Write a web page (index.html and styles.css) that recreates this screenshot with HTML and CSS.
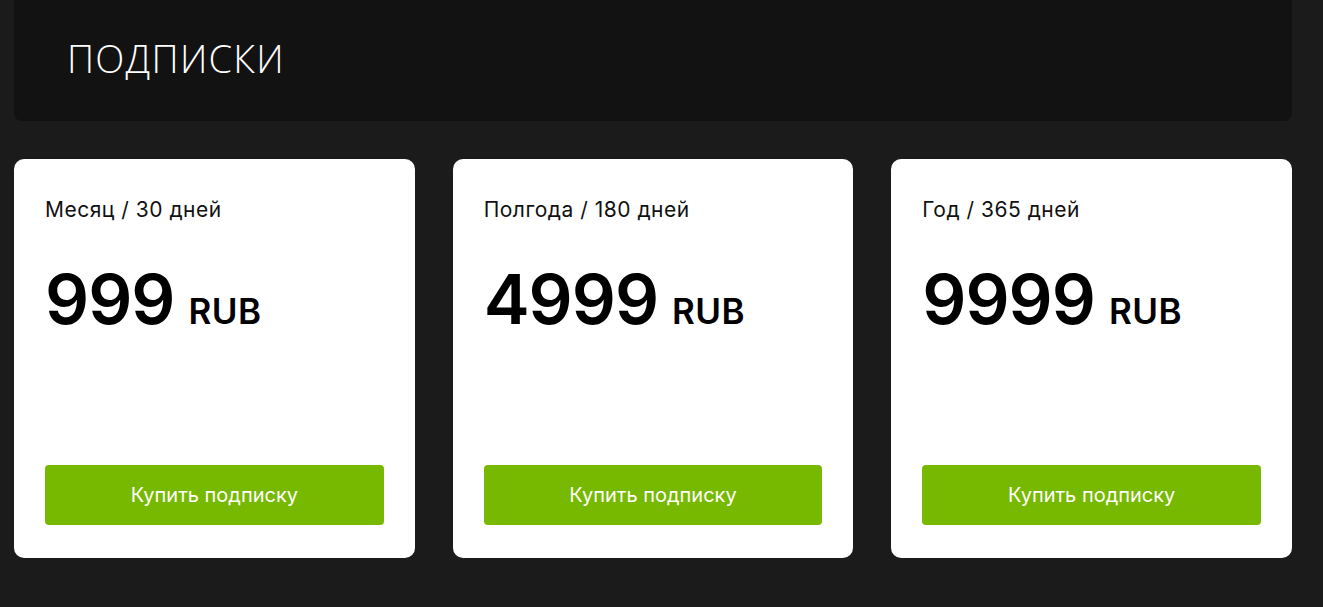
FILE: index.html
```html
<!DOCTYPE html>
<html lang="ru">
<head>
    <meta charset="UTF-8">
    <meta name="viewport" content="width=device-width, initial-scale=1.0">
    <title>Подписки</title>
    <link rel="stylesheet" href="styles.css">
</head>
<body>
    <div class="page">
        <div class="header">
            <h1>ПОДПИСКИ</h1>
        </div>

        <div class="plans">
            <div class="plan">
                <div class="plan-name">Месяц / 30 дней</div>
                <div class="plan-price"><span class="amount">999</span><span class="currency">RUB</span></div>
                <button class="buy-btn">Купить подписку</button>
            </div>
            <div class="plan">
                <div class="plan-name">Полгода / 180 дней</div>
                <div class="plan-price"><span class="amount">4999</span><span class="currency">RUB</span></div>
                <button class="buy-btn">Купить подписку</button>
            </div>
            <div class="plan">
                <div class="plan-name">Год / 365 дней</div>
                <div class="plan-price"><span class="amount">9999</span><span class="currency">RUB</span></div>
                <button class="buy-btn">Купить подписку</button>
            </div>
        </div>
    </div>
</body>
</html>
```

FILE: styles.css
```css
body {
    font-family: Inter, "Noto Sans", sans-serif;
    margin: 0;
    background-color: #1b1b1b;
}
.page {
    padding: 0 31px 0 14px;
}
.header {
    background-color: #121212;
    height: 121px;
    box-sizing: border-box;
    border-radius: 0 0 8px 8px;
    padding: 0 53px 6px;
    display: flex;
    align-items: center;
}
h1 {
    margin: 0;
    color: #fff;
    font-family: "Open Sans", sans-serif;
    font-weight: 300;
    font-size: 38px;
    letter-spacing: 1.2px;
}
.plans {
    display: grid;
    grid-template-columns: repeat(3, 1fr);
    gap: 38px;
    margin-top: 38px;
}
.plan {
    background-color: #fff;
    border-radius: 10px;
    height: 399px;
    box-sizing: border-box;
    padding: 38px 31px 33px;
    display: flex;
    flex-direction: column;
}
.plan-name {
    font-size: 21px;
    color: #111;
    letter-spacing: 0.5px;
}
.plan-price {
    margin-top: 35px;
    display: flex;
    align-items: baseline;
    color: #000;
}
.amount {
    font-size: 69px;
    font-weight: 600;
    letter-spacing: -1px;
}
.currency {
    font-size: 35px;
    font-weight: 600;
    margin-left: 14px;
    letter-spacing: 0.5px;
}
.buy-btn {
    margin-top: auto;
    height: 60px;
    border: none;
    border-radius: 4px;
    background-color: #76b900;
    color: #fff;
    font-family: Inter, "Noto Sans", sans-serif;
    font-size: 20px;
    cursor: pointer;
}
.buy-btn:hover {
    background-color: #6aa600;
}
```
